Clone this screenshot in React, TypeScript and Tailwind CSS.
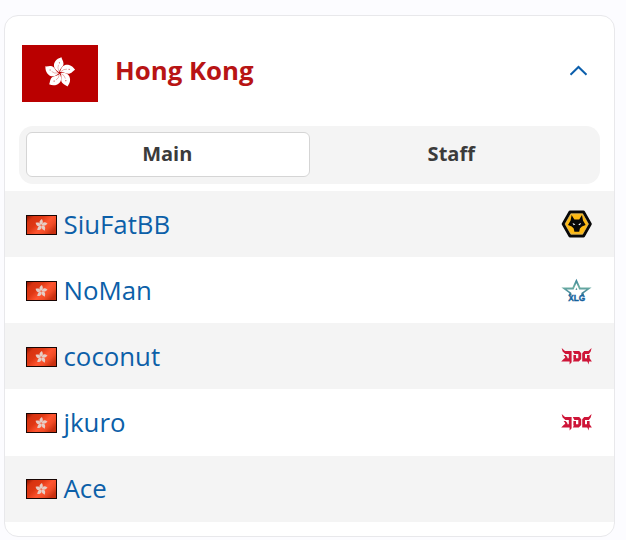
import React from 'react';

type TeamId = 'wolves' | 'xlg' | 'jdg';

interface Player {
  name: string;
  team?: TeamId;
}

const players: Player[] = [
  { name: 'SiuFatBB', team: 'wolves' },
  { name: 'NoMan', team: 'xlg' },
  { name: 'coconut', team: 'jdg' },
  { name: 'jkuro', team: 'jdg' },
  { name: 'Ace' },
];

const petalAngles = [0, 72, 144, 216, 288];

function Flag() {
  return (
    <svg viewBox="0 0 76 57" className="h-[57px] w-[76px] shrink-0">
      <rect width="76" height="57" fill="#ba0000" />
      <g transform="translate(37.7 27.8)">
        {petalAngles.map((angle) => (
          <g key={angle} transform={`rotate(${angle})`}>
            <path d="M-0.6 -0.6C-5.8 -3.4 -7 -7.6 -4.6 -11.3C-3.2 -13.6 -0.8 -14.9 1.8 -15.6C1.8 -14 3.7 -12 3.8 -9.4C3.9 -6 0.2 -5 -0.6 -0.6Z" fill="#fff" />
            <path d="M-0.7 -1.5Q-2.6 -5 -1.2 -8" stroke="#d87070" strokeWidth="0.5" fill="none" />
            <circle cx="-0.3" cy="-10" r="0.6" fill="#cf4040" />
          </g>
        ))}
      </g>
    </svg>
  );
}

function SmallFlag() {
  return (
    <svg viewBox="0 0 31 20" className="mt-px h-5 w-[31px] shrink-0">
      <defs>
        <linearGradient id="wave" x1="0" y1="0" x2="1" y2="0.65">
          <stop offset="0" stopColor="#851000" />
          <stop offset="0.2" stopColor="#d83310" />
          <stop offset="0.42" stopColor="#df3814" />
          <stop offset="0.65" stopColor="#ff5530" />
          <stop offset="0.82" stopColor="#f04c26" />
          <stop offset="1" stopColor="#c93010" />
        </linearGradient>
      </defs>
      <rect x="0.5" y="0.5" width="30" height="19" fill="url(#wave)" stroke="#180503" />
      <g transform="translate(15.4 10.2)">
        {petalAngles.map((angle) => (
          <path
            key={angle}
            transform={`rotate(${angle})`}
            d="M0 -0.4C-2.8 -2 -2.4 -4.6 0.6 -6.3C1.1 -4.5 2.6 -2.8 0 -0.4Z"
            fill="#e6cdc5"
          />
        ))}
      </g>
    </svg>
  );
}

function WolvesLogo() {
  return (
    <svg viewBox="0 0 32 28" className="h-7 w-8">
      <path d="M9 2H22.5L29.3 14L22.5 26H9L2.2 14Z" fill="#fdb913" stroke="#080808" strokeWidth="3" strokeLinejoin="round" />
      <path d="M9.8 3.9H21.7L27.4 14L21.7 24.1H9.8L4.1 14Z" fill="none" stroke="#c9b98c" strokeWidth="0.6" />
      <path d="M10.6 5L13.4 9.6H18.2L21 5L22 10.5L24.6 15L20.9 16.4L18.9 18.6L18.2 21.8H13.4L12.7 18.6L10.7 16.4L7 15L9.6 10.5Z" fill="#080808" />
      <path d="M11.5 13L14.4 14.3L12.7 15.3ZM20.1 13L17.2 14.3L18.9 15.3Z" fill="#fff" />
    </svg>
  );
}

function XlgLogo() {
  return (
    <svg viewBox="0 0 32 24" className="h-6 w-8">
      <defs>
        <linearGradient id="star" x1="0" y1="0" x2="0" y2="1">
          <stop offset="0" stopColor="#347f98" />
          <stop offset="0.5" stopColor="#6fb0a3" />
          <stop offset="1" stopColor="#2c7195" />
        </linearGradient>
      </defs>
      <path d="M0.4 9.5H11.4L15.4 0.8L19.4 9.5H30.6L22.6 15.2L23.2 17.5H7.6L8.4 15.2ZM5.8 11.5L10.6 15V16.2H20.2V15L25.2 11.5H18.2L15.4 5.2L12.6 11.5Z" fill="url(#star)" fillRule="evenodd" />
      <path d="M10.6 14.5H20.2V18H10.6Z" fill="#fff" />
      <path d="M14.5 12L15.4 9.6L16.3 12Z" fill="#579c9e" />
      <text x="15.8" y="22.8" textAnchor="middle" textLength="17" lengthAdjust="spacingAndGlyphs" fontSize="8.4" strokeWidth="0.4" className="fill-[#15629d] stroke-[#15629d] font-['Liberation_Sans'] font-bold">
        XLG
      </text>
    </svg>
  );
}

function JdgLogo() {
  return (
    <svg viewBox="0 0 32 20" className="h-5 w-8 fill-[#ce1538]">
      <path d="M0.7 2L4 4.9H10.6V16.3L8.6 18.6V15.4H0.2L3.4 12.3H7.8V7.9H4.4L1.6 5.5Z" />
      <path d="M2.6 9L4.6 9L6.4 11V13H4.1V11Z" />
      <path d="M11.8 4.9H18.2L20.2 7.2V13.1L17.8 15.4H11.8L13.6 12.3H17.3V7.9H13.4ZM12.4 9H15V13.4H12.4Z" />
      <path d="M30.6 2L27.4 4.9H23.2L21.2 7.2V15.4H26.2L27.9 18.6V15.4H30.9L28.6 12.3V9H26V12.3H24V7.9H27.8L29.7 5.5Z" />
    </svg>
  );
}

function TeamLogo({ team }: { team: TeamId }) {
  if (team === 'wolves') return <WolvesLogo />;
  if (team === 'xlg') return <XlgLogo />;
  return <JdgLogo />;
}

export default function App() {
  return (
    <div className="h-[540px] w-[626px] bg-[#fcfcff] pt-[15px] pl-1 font-['Open_Sans',sans-serif]">
      <div className="h-[522px] w-[611px] overflow-hidden rounded-[14px] border border-[#e8e8eb] bg-white">
        {/* Team header */}
        <div className="flex h-[110px] items-center pt-[4px] pr-[26px] pl-[17px]">
          <Flag />
          <h2 className="mb-[7px] ml-[17px] flex-1 text-[25.8px] leading-9 font-bold text-[#b81414]">Hong Kong</h2>
          <svg viewBox="0 0 20 12" className="mb-[4px] h-3 w-5 fill-none stroke-[#0c5fac] stroke-2">
            <path d="M2.5 9.8L10.5 2L18.5 9.8" />
          </svg>
        </div>

        {/* Tabs */}
        <div className="mx-[14px] flex h-[58px] rounded-[14px] bg-[#f4f4f4] px-[7px] pt-[6px] text-[20px] font-bold text-[#3b3b3b]">
          <button className="h-[45px] w-[284px] rounded-[6px] border border-[#d5d5d5] bg-white pr-px pb-0.5">Main</button>
          <button className="h-[45px] w-[284px] pb-0.5">Staff</button>
        </div>

        {/* Players */}
        <ul className="mt-[7px]">
          {players.map(({ name, team }) => (
            <li key={name} className="flex h-[66.15px] items-center pr-[21px] pl-[21px] odd:bg-[#f4f4f4]">
              <SmallFlag />
              <a className="mb-px ml-[6.5px] flex-1 text-[25.8px] leading-9 text-[#0c5fa8]">{name}</a>
              {team && <TeamLogo team={team} />}
            </li>
          ))}
        </ul>
      </div>
    </div>
  );
}
